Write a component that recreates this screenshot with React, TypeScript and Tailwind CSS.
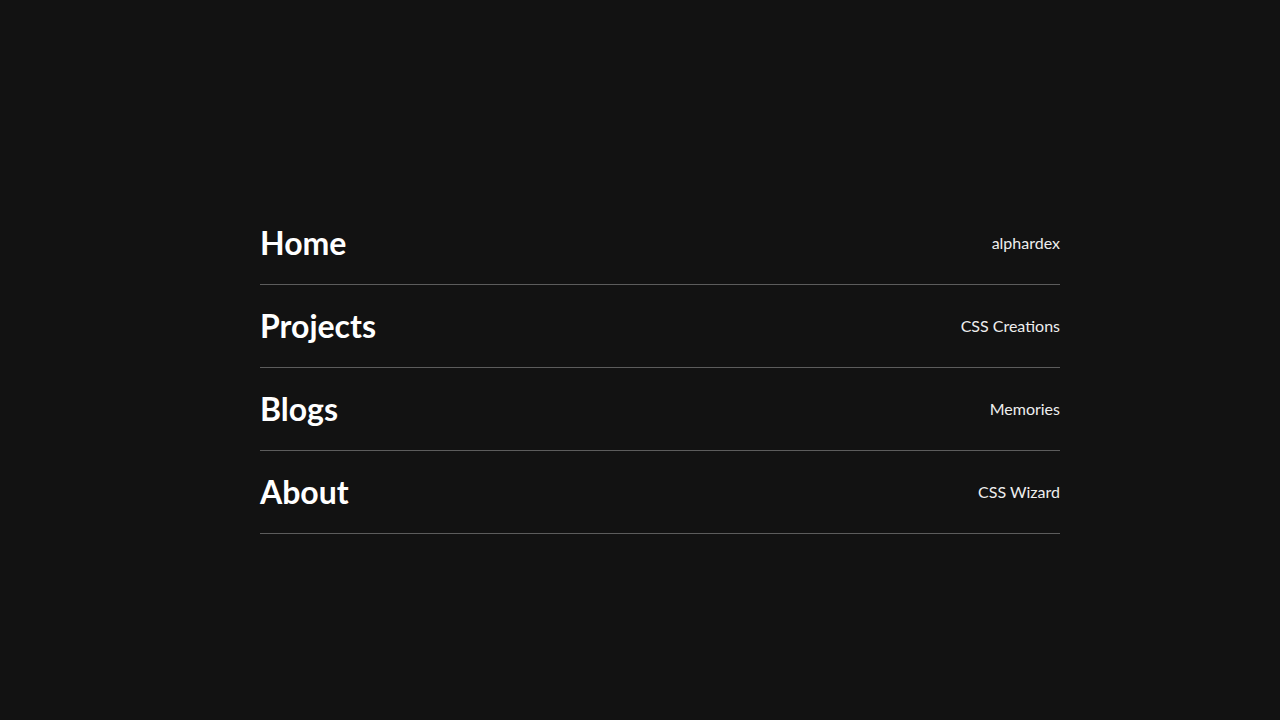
import React from "react";

const items = [
  { title: "Home", sub: "alphardex" },
  { title: "Projects", sub: "CSS Creations" },
  { title: "Blogs", sub: "Memories" },
  { title: "About", sub: "CSS Wizard" },
];

export default function App() {
  return (
    <div
      className="min-h-screen w-full bg-[#121212] pt-[202px] pl-[260px]"
      style={{ fontFamily: "Lato, 'Noto Sans', sans-serif" }}
    >
      <ul className="w-[800px]">
        {items.map((it) => (
          <li
            key={it.title}
            className="flex items-center justify-between border-b border-[#5c5c5c] py-5"
          >
            <span className="text-[32px] font-bold leading-[42px] text-white">
              {it.title}
            </span>
            <span className="text-[16px] text-[#eeeeee]">{it.sub}</span>
          </li>
        ))}
      </ul>
    </div>
  );
}
